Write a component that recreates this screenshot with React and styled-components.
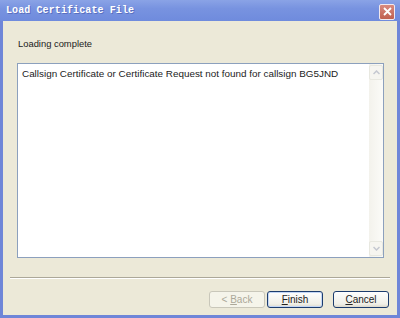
import React from 'react'
import styled, { createGlobalStyle } from 'styled-components'

const Global = createGlobalStyle`
  html, body { margin: 0; padding: 0; background: #ece9d8; }
  body { font-family: "Liberation Sans", Arial, sans-serif; }
`

const Frame = styled.div`
  width: 400px;
  height: 318px;
  display: flex;
  flex-direction: column;
  overflow: hidden;
`

const TitleBar = styled.div`
  height: 21px;
  flex: none;
  display: flex;
  align-items: center;
  justify-content: space-between;
  padding: 0 5px 0 6px;
  background: linear-gradient(#8aa3e6, #7893e0 40%, #6f8bdd);
`

const Title = styled.span`
  font-family: "Liberation Mono", "Courier New", monospace;
  font-weight: bold;
  font-size: 10px;
  color: #fff;
  letter-spacing: 0.1px;
  text-shadow: 1px 1px 0 #5a6fbf;
`

const Close = styled.div`
  width: 14px;
  height: 14px;
  margin-top: 2px;
  border: 1px solid #f1e8ee;
  border-radius: 2px;
  background: linear-gradient(#d88a7f, #c0604f);
  display: flex;
  align-items: center;
  justify-content: center;
`

const Body = styled.div`
  flex: 1;
  display: flex;
  flex-direction: column;
  background: #ece9d8;
  border: 3px solid #6f86d8;
  border-top: none;
`

const Content = styled.div`
  padding: 16px 13px 0 14px;
`

const Heading = styled.div`
  font-size: 9.4px;
  line-height: 13px;
  color: #222;
  padding-left: 1px;
`

const TextBox = styled.div`
  margin-top: 13px;
  height: 195px;
  box-sizing: border-box;
  border: 1px solid #8ca0bd;
  background: #fff;
  display: flex;
`

const Message = styled.div`
  flex: 1;
  padding: 4px 4px;
  font-size: 9.9px;
  line-height: 12px;
  color: #222;
  white-space: nowrap;
`

const ScrollBar = styled.div`
  width: 14px;
  display: flex;
  flex-direction: column;
  justify-content: space-between;
  background: linear-gradient(90deg, #f3f2ec, #fbfbf8);
  padding: 1px 0;
`

const Arrow = styled.div`
  height: 13px;
  border: 1px solid #e8e8e0;
  border-radius: 2px;
  background: #f6f5f0;
  display: flex;
  align-items: center;
  justify-content: center;
`

const Separator = styled.div`
  margin: 19px 7px 0 7px;
  height: 1px;
  background: #aca899;
  border-bottom: 1px solid #fff;
`

const Footer = styled.div`
  display: flex;
  justify-content: flex-end;
  padding: 12px 8px 0 0;
`

const Button = styled.button`
  width: 56px;
  height: 17px;
  margin-left: ${p => p.$gap || 0}px;
  padding: 0;
  box-sizing: border-box;
  border: 1px solid ${p => (p.disabled ? '#c9c7ba' : '#1c3c6e')};
  border-radius: 3px;
  background: ${p => (p.disabled ? '#f5f4ea' : 'linear-gradient(#fefefe, #f0efe7 80%, #dcd8cb)')};
  box-shadow: ${p => (p.$default ? 'inset 0 0 0 1px #c3d6f5' : 'none')};
  font-family: "Liberation Sans", Arial, sans-serif;
  font-size: 10px;
  color: ${p => (p.disabled ? '#aca899' : '#222')};
  u { text-decoration: underline; }
`

const Chevron = ({ up }) => (
  <svg width="7" height="5" viewBox="0 0 7 5">
    <path d={up ? 'M0.5 4 L3.5 1 L6.5 4' : 'M0.5 1 L3.5 4 L6.5 1'} fill="none" stroke="#c5c8d0" strokeWidth="1.5" />
  </svg>
)

export default function App() {
  return (
    <Frame>
      <Global />
      <TitleBar>
        <Title>Load Certificate File</Title>
        <Close>
          <svg width="9" height="9" viewBox="0 0 9 9">
            <path d="M1 1 L8 8 M8 1 L1 8" stroke="#fff" strokeWidth="1.8" />
          </svg>
        </Close>
      </TitleBar>
      <Body>
        <Content>
          <Heading>Loading complete</Heading>
          <TextBox>
            <Message>Callsign Certificate or Certificate Request not found for callsign BG5JND</Message>
            <ScrollBar>
              <Arrow><Chevron up /></Arrow>
              <Arrow><Chevron /></Arrow>
            </ScrollBar>
          </TextBox>
        </Content>
        <Separator />
        <Footer>
          <Button disabled>&lt; <u>B</u>ack</Button>
          <Button $gap={2} $default><u>F</u>inish</Button>
          <Button $gap={10}><u>C</u>ancel</Button>
        </Footer>
      </Body>
    </Frame>
  )
}
